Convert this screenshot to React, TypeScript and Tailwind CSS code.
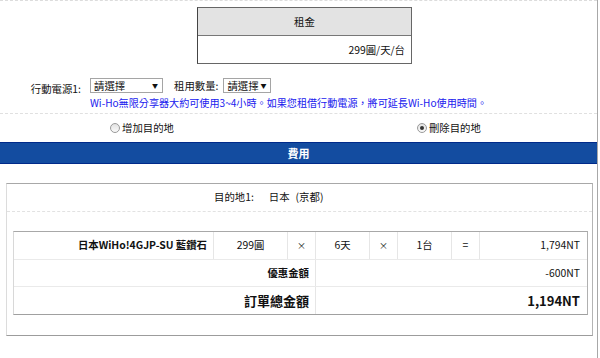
// Fake select box, looks like the old native dropdown
function SelectBox({ width }: { width: string }) {
  return (
    <div className={`${width} h-[15px] shrink-0 whitespace-nowrap border border-[#a5a5a5] bg-white flex items-center justify-between pl-[3px] pr-[4px] leading-none`}>
      <span>請選擇</span>
      <span className="text-[6px]">▼</span>
    </div>
  );
}

function Radio({ checked }: { checked?: boolean }) {
  return (
    <span className="w-[10px] h-[10px] rounded-full border border-[#9a9a9a] bg-gradient-to-b from-[#e2e2e2] to-[#fafafa] flex items-center justify-center">
      {checked && <span className="w-[4px] h-[4px] rounded-full bg-[#333]" />}
    </span>
  );
}

const cell = 'flex items-center border-r border-[#e6e6e6]';

export default function App() {
  return (
    <div className="w-[600px] h-[358px] bg-white overflow-hidden font-['Noto_Sans_CJK_TC',sans-serif] text-[10.4px] text-[#111]">
      <div className="w-[598px] h-full border-r border-[#a8a8a8]">
        <div className="border-t border-dashed border-[#dcdcdc]" />

        {/* rent table */}
        <div className="ml-[197px] mt-[6px] w-[215px] border border-[#666] border-l-[#444]">
          <div className="h-[28px] bg-[#e3e3e3] border-b border-[#777] flex items-center justify-center">租金</div>
          <div className="h-[27px] flex items-center justify-end pr-[6px]">299圓/天/台</div>
        </div>

        {/* power bank */}
        <div className="mt-[14px] flex">
          <div className="w-[81px] text-right pt-[3px]">行動電源1:</div>
          <div className="ml-[9px]">
            <div className="flex items-center whitespace-nowrap">
              <SelectBox width="w-[73px]" />
              <span className="ml-[11px] mr-[5px]">租用數量:</span>
              <SelectBox width="w-[48px]" />
            </div>
            <div className="mt-[1px] text-[#2020ee] whitespace-nowrap text-[10.1px]">
              Wi-Ho無限分享器大約可使用3~4小時。如果您租借行動電源，將可延長Wi-Ho使用時間。
            </div>
          </div>
        </div>

        <div className="mt-[3px] border-t border-dashed border-[#e0e0e0]" />

        {/* destination radios */}
        <div className="h-[28px] flex items-center">
          <label className="ml-[110px] flex items-center gap-[2px]">
            <Radio />
            <span>增加目的地</span>
          </label>
          <label className="ml-[243px] flex items-center gap-[2px]">
            <Radio checked />
            <span>刪除目的地</span>
          </label>
        </div>

        {/* fee bar */}
        <div className="h-[22px] bg-[#134ca0] border-y border-[#002a8a] flex items-center justify-center text-white font-bold text-[11px]">
          費用
        </div>

        {/* fee box */}
        <div className="mt-[19px] ml-[6px] w-[587px] h-[153px] border border-[#dcdcdc] border-t-[#a8a8a8] border-b-[#9c9c9c] border-r-[#b4b4b4]">
          <div className="h-[27px] flex items-center pl-[207px]">
            <span>目的地1:</span>
            <span className="ml-[15px]">日本</span>
            <span className="ml-[6px]">(京都)</span>
          </div>
          <div className="border-t border-dashed border-[#e2e2e2]" />

          <div className="mt-[19px] ml-[6px] w-[575px] border border-[#d8d8d8] border-t-[#a8a8a8] border-b-[#a0a0a0] border-r-[#b0b0b0]">
            <div className="h-[28px] grid grid-cols-[200px_74px_28px_54px_28px_54px_28px_1fr] border-b border-[#eaeaea]">
              <div className={`${cell} justify-end pr-[6px] font-bold`}>日本WiHo!4GJP-SU 藍鑽石</div>
              <div className={`${cell} justify-center`}>299圓</div>
              <div className={`${cell} justify-center text-[9px]`}>×</div>
              <div className={`${cell} justify-center`}>6天</div>
              <div className={`${cell} justify-center text-[9px]`}>×</div>
              <div className={`${cell} justify-center`}>1台</div>
              <div className={`${cell} justify-center`}>=</div>
              <div className="flex items-center justify-end pr-[7px]">1,794NT</div>
            </div>
            <div className="h-[27px] grid grid-cols-[302px_1fr] border-b border-[#eaeaea]">
              <div className={`${cell} justify-end pr-[6px] font-bold`}>優惠金額</div>
              <div className="flex items-center justify-end pr-[7px]">-600NT</div>
            </div>
            <div className="h-[27px] grid grid-cols-[302px_1fr]">
              <div className={`${cell} justify-end pr-[6px] font-bold text-[13px]`}>訂單總金額</div>
              <div className="flex items-center justify-end pr-[7px] font-bold text-[13px]">1,194NT</div>
            </div>
          </div>
        </div>
      </div>
    </div>
  );
}
